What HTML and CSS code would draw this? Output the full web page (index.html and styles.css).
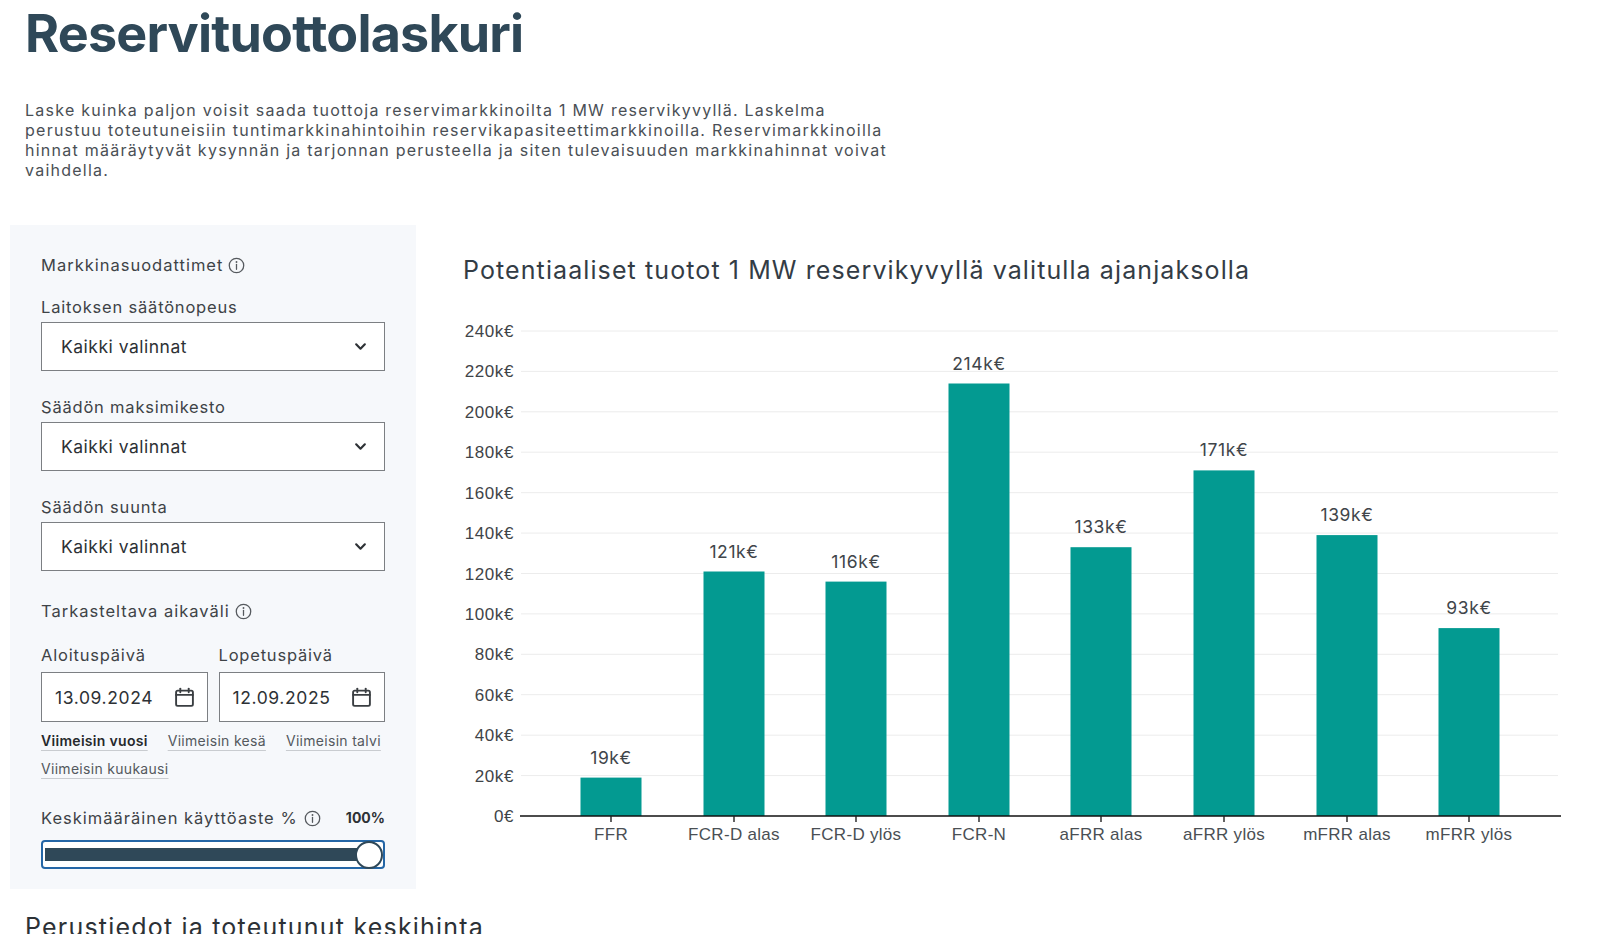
FILE: index.html
```html
<!DOCTYPE html>
<html lang="fi">
<head>
<meta charset="utf-8">
<title>Reservituottolaskuri</title>
<link rel="stylesheet" href="styles.css">
</head>
<body>
<header class="intro">
  <h1 class="title">Reservituottolaskuri</h1>
  <p class="lead">Laske kuinka paljon voisit saada tuottoja reservimarkkinoilta 1 MW reservikyvyllä. Laskelma perustuu toteutuneisiin tuntimarkkinahintoihin reservikapasiteettimarkkinoilla. Reservimarkkinoilla hinnat määräytyvät kysynnän ja tarjonnan perusteella ja siten tulevaisuuden markkinahinnat voivat vaihdella.</p>
</header>

<section class="calc">
  <aside class="panel">
    <div class="group-title">Markkinasuodattimet
      <svg class="info" viewBox="0 0 16 16"><circle cx="8" cy="8" r="6.8"/><line x1="8" y1="7" x2="8" y2="11.6"/><circle class="dot" cx="8" cy="4.7" r="0.9"/></svg>
    </div>

    <div class="field">
      <div class="label">Laitoksen säätönopeus</div>
      <div class="select"><span>Kaikki valinnat</span><svg class="chev" viewBox="0 0 12 8"><path d="M2 2 L6 6 L10 2"/></svg></div>
    </div>
    <div class="field">
      <div class="label">Säädön maksimikesto</div>
      <div class="select"><span>Kaikki valinnat</span><svg class="chev" viewBox="0 0 12 8"><path d="M2 2 L6 6 L10 2"/></svg></div>
    </div>
    <div class="field">
      <div class="label">Säädön suunta</div>
      <div class="select"><span>Kaikki valinnat</span><svg class="chev" viewBox="0 0 12 8"><path d="M2 2 L6 6 L10 2"/></svg></div>
    </div>

    <div class="group-title range-title">Tarkasteltava aikaväli
      <svg class="info" viewBox="0 0 16 16"><circle cx="8" cy="8" r="6.8"/><line x1="8" y1="7" x2="8" y2="11.6"/><circle class="dot" cx="8" cy="4.7" r="0.9"/></svg>
    </div>

    <div class="dates">
      <div class="date-field">
        <div class="label">Aloituspäivä</div>
        <div class="date"><span>13.09.2024</span><svg class="cal" viewBox="0 0 20 20"><rect x="2" y="3.5" width="16" height="14.5" rx="1.5"/><line x1="2" y1="7.5" x2="18" y2="7.5"/><line x1="6" y1="1.5" x2="6" y2="5"/><line x1="14" y1="1.5" x2="14" y2="5"/></svg></div>
      </div>
      <div class="date-field">
        <div class="label">Lopetuspäivä</div>
        <div class="date"><span>12.09.2025</span><svg class="cal" viewBox="0 0 20 20"><rect x="2" y="3.5" width="16" height="14.5" rx="1.5"/><line x1="2" y1="7.5" x2="18" y2="7.5"/><line x1="6" y1="1.5" x2="6" y2="5"/><line x1="14" y1="1.5" x2="14" y2="5"/></svg></div>
      </div>
    </div>

    <div class="presets">
      <span class="preset active">Viimeisin vuosi</span>
      <span class="preset">Viimeisin kesä</span>
      <span class="preset">Viimeisin talvi</span>
      <span class="preset">Viimeisin kuukausi</span>
    </div>

    <div class="usage-head">
      <span class="usage-label">Keskimääräinen käyttöaste %
        <svg class="info" viewBox="0 0 16 16"><circle cx="8" cy="8" r="6.8"/><line x1="8" y1="7" x2="8" y2="11.6"/><circle class="dot" cx="8" cy="4.7" r="0.9"/></svg>
      </span>
      <span class="usage-value">100%</span>
    </div>
    <div class="slider">
      <div class="track"></div>
      <div class="thumb"></div>
    </div>
  </aside>

  <div class="chart-col">
    <h2 class="chart-title">Potentiaaliset tuotot 1 MW reservikyvyllä valitulla ajanjaksolla</h2>
    <svg class="chart" width="1147" height="560" viewBox="453 300 1147 560">
      <g class="grid">
        <line x1="521" x2="1558" y1="331" y2="331"/>
        <line x1="521" x2="1558" y1="371.4" y2="371.4"/>
        <line x1="521" x2="1558" y1="411.8" y2="411.8"/>
        <line x1="521" x2="1558" y1="452.2" y2="452.2"/>
        <line x1="521" x2="1558" y1="492.7" y2="492.7"/>
        <line x1="521" x2="1558" y1="533.1" y2="533.1"/>
        <line x1="521" x2="1558" y1="573.5" y2="573.5"/>
        <line x1="521" x2="1558" y1="613.9" y2="613.9"/>
        <line x1="521" x2="1558" y1="654.3" y2="654.3"/>
        <line x1="521" x2="1558" y1="694.7" y2="694.7"/>
        <line x1="521" x2="1558" y1="735.2" y2="735.2"/>
        <line x1="521" x2="1558" y1="775.6" y2="775.6"/>
      </g>
      <g class="ylabels">
        <text x="514" y="337">240k€</text>
        <text x="514" y="377.4">220k€</text>
        <text x="514" y="417.8">200k€</text>
        <text x="514" y="458.2">180k€</text>
        <text x="514" y="498.7">160k€</text>
        <text x="514" y="539.1">140k€</text>
        <text x="514" y="579.5">120k€</text>
        <text x="514" y="619.9">100k€</text>
        <text x="514" y="660.3">80k€</text>
        <text x="514" y="700.7">60k€</text>
        <text x="514" y="741.2">40k€</text>
        <text x="514" y="781.6">20k€</text>
        <text x="514" y="822">0€</text>
      </g>
      <g class="bars">
        <rect x="580.5" y="777.6" width="61" height="38.4"/>
        <rect x="703.5" y="571.5" width="61" height="244.5"/>
        <rect x="825.5" y="581.6" width="61" height="234.4"/>
        <rect x="948.5" y="383.5" width="61" height="432.5"/>
        <rect x="1070.5" y="547.2" width="61" height="268.8"/>
        <rect x="1193.5" y="470.4" width="61" height="345.6"/>
        <rect x="1316.5" y="535.1" width="61" height="280.9"/>
        <rect x="1438.5" y="628.1" width="61" height="187.9"/>
      </g>
      <g class="values">
        <text x="611" y="763.6">19k€</text>
        <text x="734" y="557.5">121k€</text>
        <text x="856" y="567.6">116k€</text>
        <text x="979" y="369.5">214k€</text>
        <text x="1101" y="533.2">133k€</text>
        <text x="1224" y="456.4">171k€</text>
        <text x="1347" y="521.1">139k€</text>
        <text x="1469" y="614.1">93k€</text>
      </g>
      <line class="axis" x1="520" x2="1561" y1="816" y2="816"/>
      <g class="ticks">
        <line x1="611" x2="611" y1="816" y2="822"/>
        <line x1="734" x2="734" y1="816" y2="822"/>
        <line x1="856" x2="856" y1="816" y2="822"/>
        <line x1="979" x2="979" y1="816" y2="822"/>
        <line x1="1101" x2="1101" y1="816" y2="822"/>
        <line x1="1224" x2="1224" y1="816" y2="822"/>
        <line x1="1347" x2="1347" y1="816" y2="822"/>
        <line x1="1469" x2="1469" y1="816" y2="822"/>
      </g>
      <g class="xlabels">
        <text x="611" y="840">FFR</text>
        <text x="734" y="840">FCR-D alas</text>
        <text x="856" y="840">FCR-D ylös</text>
        <text x="979" y="840">FCR-N</text>
        <text x="1101" y="840">aFRR alas</text>
        <text x="1224" y="840">aFRR ylös</text>
        <text x="1347" y="840">mFRR alas</text>
        <text x="1469" y="840">mFRR ylös</text>
      </g>
    </svg>
  </div>
</section>

<h2 class="section-title">Perustiedot ja toteutunut keskihinta</h2>
</body>
</html>
```

FILE: styles.css
```css
* { box-sizing: border-box; }

html, body {
  margin: 0;
  padding: 0;
  background: #ffffff;
}

body {
  font-family: Inter, "Noto Sans", "Liberation Sans", sans-serif;
  color: #3a3f44;
}

.intro {
  padding: 4px 0 0 25px;
}

.title {
  margin: 0;
  font-size: 52px;
  line-height: 60px;
  font-weight: 700;
  color: #2f4858;
  letter-spacing: -0.8px;
}

.lead {
  margin: 36px 0 0 0;
  max-width: 880px;
  font-size: 16px;
  line-height: 20px;
  letter-spacing: 1.25px;
  color: #4a4f55;
}

.calc {
  display: flex;
  align-items: flex-start;
  margin-top: 45px;
  padding-left: 10px;
}

.panel {
  flex: 0 0 406px;
  width: 406px;
  background: #f6f8fb;
  padding: 30px 31px 20px 31px;
}

.group-title {
  display: flex;
  align-items: center;
  gap: 5px;
  font-size: 16.5px;
  line-height: 20px;
  letter-spacing: 1px;
  color: #3e4347;
}

.range-title {
  margin-top: 30px;
}

.info {
  width: 17px;
  height: 17px;
  fill: none;
  stroke: #55595e;
  stroke-width: 1.2;
  stroke-linecap: round;
}

.info .dot {
  fill: #55595e;
  stroke: none;
}

.field {
  margin-top: 22px;
}

.field + .field {
  margin-top: 26px;
}

.label {
  font-size: 16.5px;
  line-height: 20px;
  letter-spacing: 0.8px;
  color: #3e4347;
  margin-bottom: 5px;
}

.select {
  height: 49px;
  background: #ffffff;
  border: 1.5px solid #7c7f83;
  display: flex;
  align-items: center;
  justify-content: space-between;
  padding: 0 17px 0 19px;
  font-size: 17.5px;
  letter-spacing: 0.5px;
  color: #2d3135;
}

.chev {
  width: 13px;
  height: 9px;
  fill: none;
  stroke: #2d3135;
  stroke-width: 2;
  stroke-linecap: round;
  stroke-linejoin: round;
}

.dates {
  display: flex;
  gap: 11px;
  margin-top: 24px;
}

.date-field {
  flex: 1 1 0;
}

.date-field .label {
  margin-bottom: 7px;
}

.date {
  height: 50px;
  background: #ffffff;
  border: 1.5px solid #7c7f83;
  display: flex;
  align-items: center;
  justify-content: space-between;
  padding: 0 12px 0 13px;
  font-size: 17.5px;
  letter-spacing: 0.6px;
  color: #2d3135;
}

.cal {
  width: 21px;
  height: 21px;
  fill: none;
  stroke: #3a3e42;
  stroke-width: 1.8;
  stroke-linecap: round;
}

.presets {
  display: flex;
  flex-wrap: wrap;
  column-gap: 20px;
  margin-top: 5px;
  font-size: 14px;
  line-height: 28px;
  letter-spacing: 0.3px;
  color: #54595e;
}

.preset {
  text-decoration: underline;
  text-decoration-color: #c9ccd0;
  text-underline-offset: 4px;
  text-decoration-thickness: 1px;
}

.preset.active {
  font-weight: 600;
  color: #26292c;
}

.usage-head {
  display: flex;
  align-items: center;
  justify-content: space-between;
  margin-top: 25px;
  line-height: 20px;
}

.usage-label {
  display: flex;
  align-items: center;
  gap: 6px;
  font-size: 16.5px;
  letter-spacing: 1px;
  color: #3e4347;
}

.usage-value {
  font-size: 14px;
  font-weight: 700;
  color: #2d3135;
}

.slider {
  position: relative;
  margin-top: 12px;
  height: 29px;
  border: 2px solid #2466a6;
  border-radius: 4px;
  background: #ffffff;
  display: flex;
  align-items: center;
  padding: 0 2px;
}

.track {
  flex: 1 1 auto;
  height: 13px;
  background: #2f4858;
}

.thumb {
  position: absolute;
  right: 0;
  top: 50%;
  width: 28px;
  height: 28px;
  margin-top: -14px;
  border-radius: 50%;
  background: #ffffff;
  border: 2px solid #2f4858;
}

.chart-col {
  flex: 1 1 auto;
  padding-left: 37px;
  padding-top: 29px;
  min-width: 0;
}

.chart-title {
  margin: 0 0 0 10px;
  font-size: 25px;
  line-height: 32px;
  font-weight: 400;
  letter-spacing: 1.1px;
  color: #333c45;
}

.chart {
  display: block;
  margin-top: 14px;
}

.grid line {
  stroke: #ececec;
  stroke-width: 1;
}

.axis {
  stroke: #111111;
  stroke-width: 1.6;
}

.ticks line {
  stroke: #222222;
  stroke-width: 1.4;
}

.bars rect {
  fill: #039a91;
}

.ylabels text {
  font-family: "Liberation Sans", Arial, sans-serif;
  font-size: 17px;
  letter-spacing: 0.6px;
  fill: #3f4448;
  text-anchor: end;
}

.xlabels text {
  font-family: "Liberation Sans", Arial, sans-serif;
  font-size: 17px;
  letter-spacing: 0.3px;
  fill: #4a4f54;
  text-anchor: middle;
}

.values text {
  font-family: Inter, "Liberation Sans", sans-serif;
  font-size: 17.5px;
  letter-spacing: 0.6px;
  fill: #40454a;
  text-anchor: middle;
}

.section-title {
  margin: 22px 0 0 25px;
  font-size: 25px;
  line-height: 32px;
  font-weight: 400;
  letter-spacing: 1.2px;
  color: #2c3136;
}
```
